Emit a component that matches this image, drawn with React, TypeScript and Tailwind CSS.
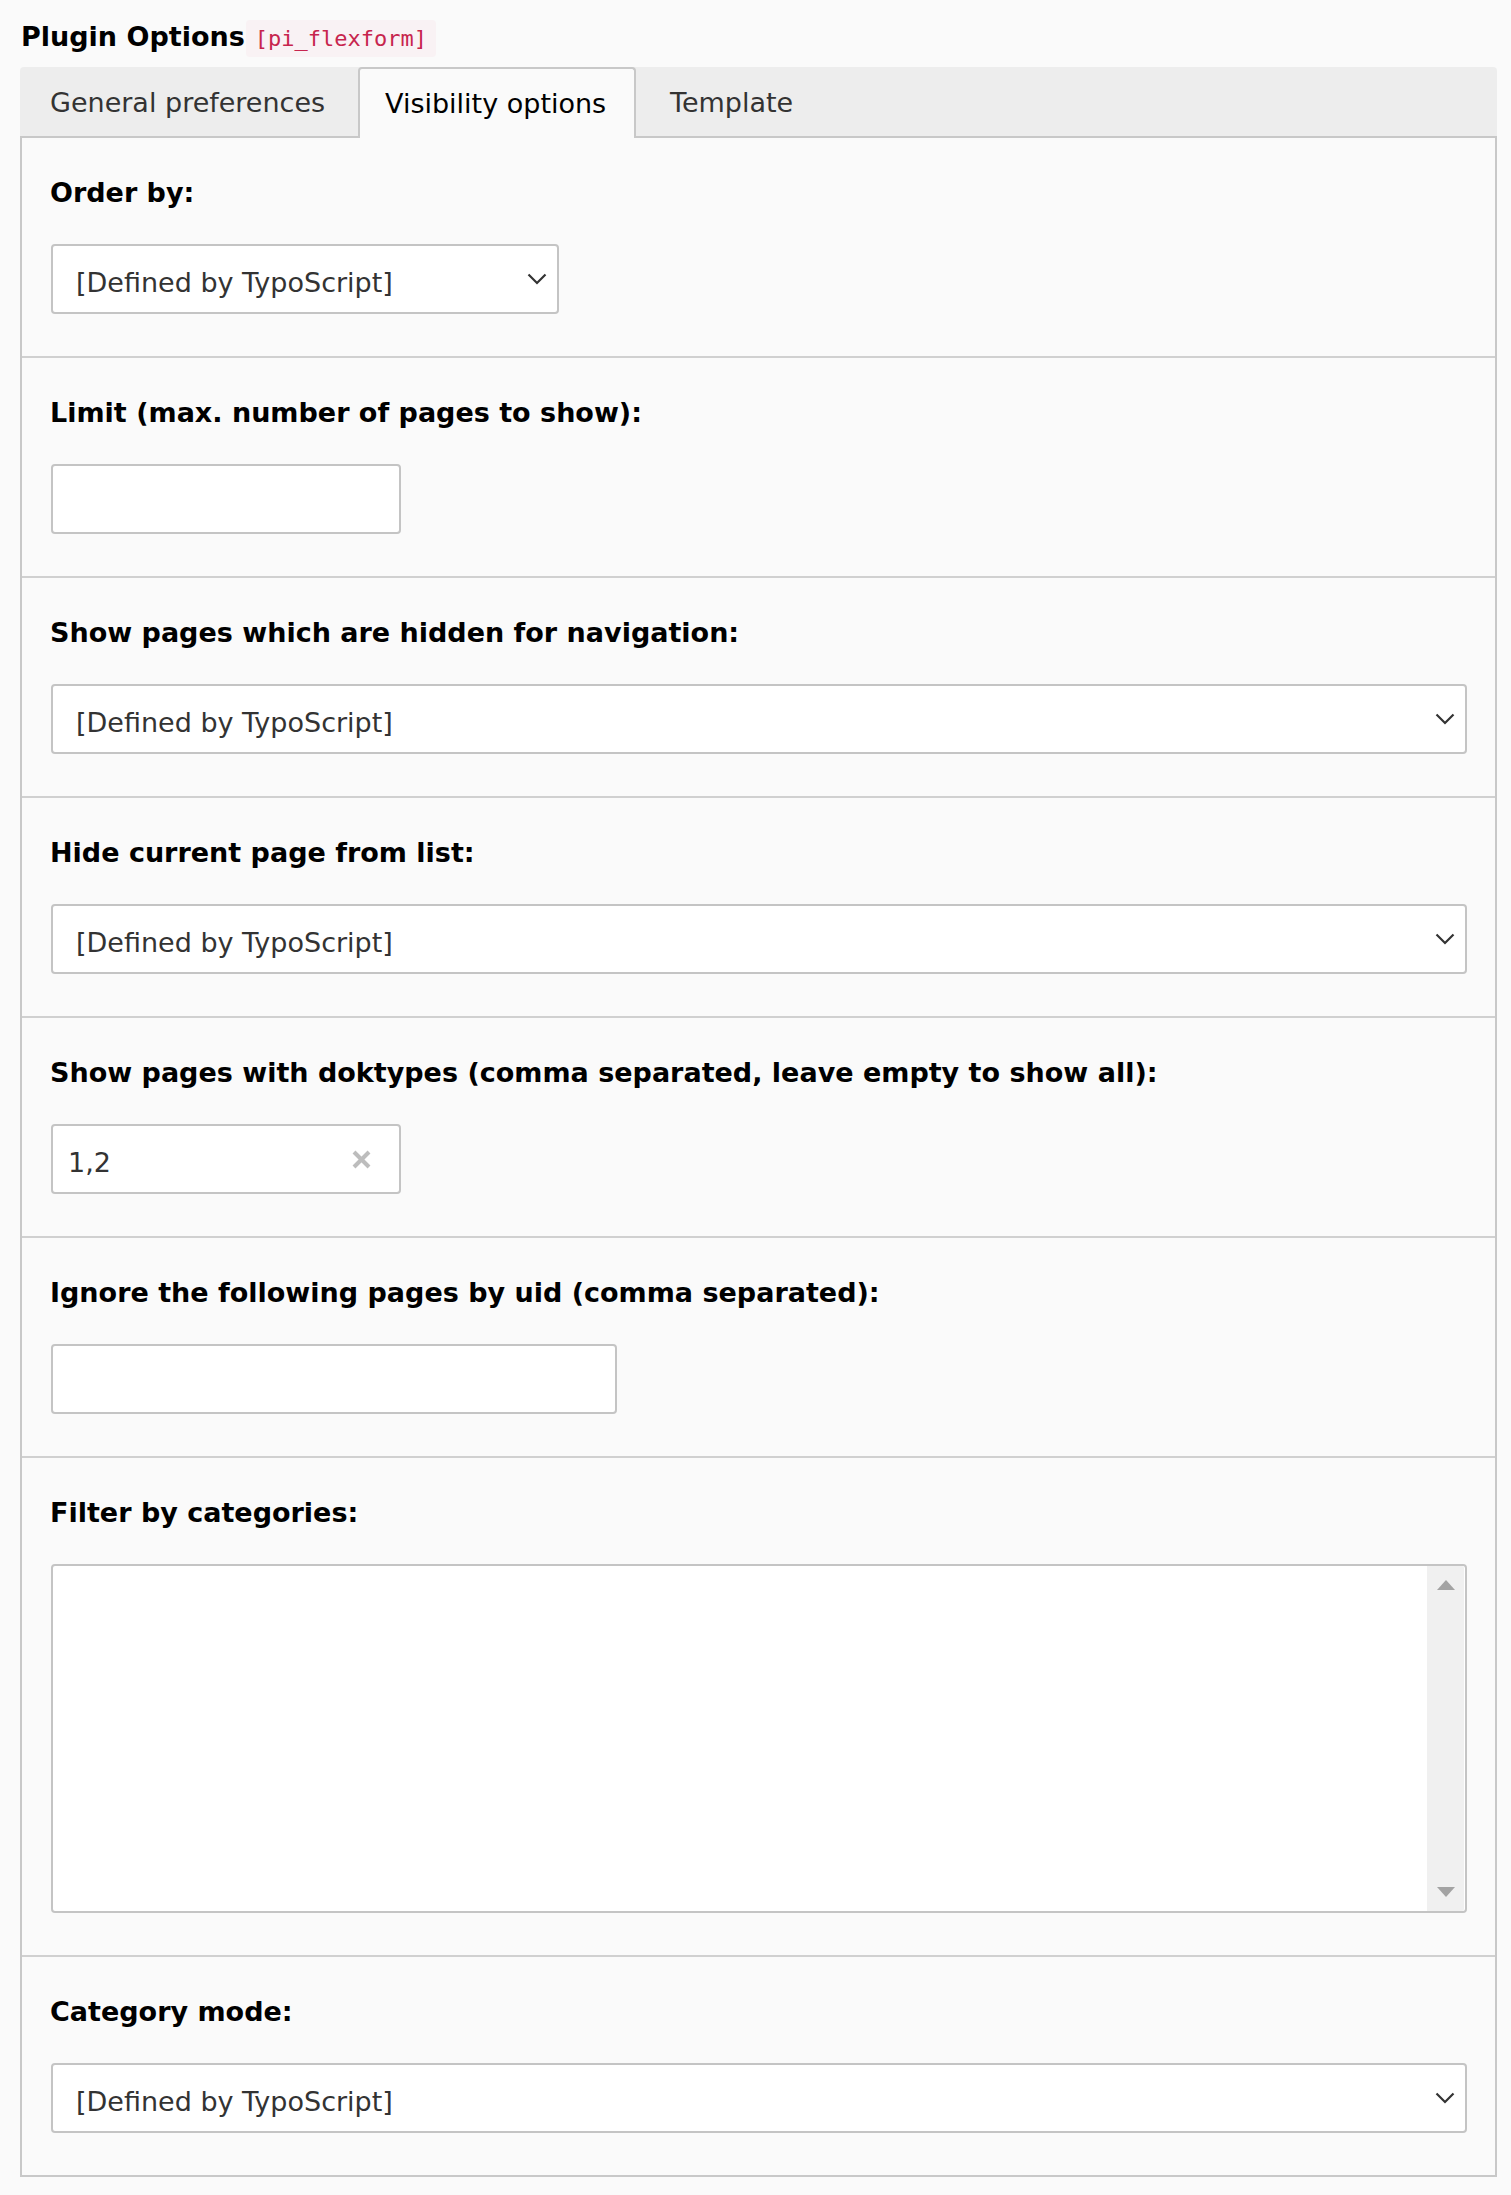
import React from "react";

const FONT = { fontFamily: '"DejaVu Sans", Verdana, sans-serif' };

function Chevron() {
  return (
    <svg width="20" height="12" viewBox="0 0 20 12" className="shrink-0">
      <polyline points="1.5,1.5 10,10 18.5,1.5" fill="none" stroke="#333" strokeWidth="2.2" />
    </svg>
  );
}

function Select({ width }: { width?: string }) {
  return (
    <div
      className={`h-[70px] bg-white border-2 border-[#c4c4c4] rounded-[4px] flex items-center justify-between pl-[23px] pr-[10px] text-[27px] text-[#333] ${width ?? "w-full"}`}
    >
      <span className="leading-[40px] pt-[7px]">[Defined by TypoScript]</span>
      <Chevron />
    </div>
  );
}

function Input({ width, value, clear }: { width: string; value?: string; clear?: boolean }) {
  return (
    <div
      className={`h-[70px] bg-white border-2 border-[#c4c4c4] rounded-[4px] flex items-center justify-between pl-[15px] pr-[28px] text-[27px] text-[#333] ${width}`}
    >
      <span className="leading-[40px] pt-[7px]">{value ?? ""}</span>
      {clear && (
        <svg width="19" height="19" viewBox="0 0 19 19">
          <line x1="2" y1="2" x2="17" y2="17" stroke="#bdbdbd" strokeWidth="4" />
          <line x1="17" y1="2" x2="2" y2="17" stroke="#bdbdbd" strokeWidth="4" />
        </svg>
      )}
    </div>
  );
}

function Section({ label, children, first }: { label: string; children: React.ReactNode; first?: boolean }) {
  return (
    <div className={`pt-[35px] pb-[42px] pl-[28px] pr-[28px] ${first ? "" : "border-t-2 border-[#d0d0d0]"}`}>
      <div className="text-[27px] leading-[40px] font-bold text-black mb-[31px]">{label}</div>
      <div className="pl-[1px]">{children}</div>
    </div>
  );
}

function MultiSelect() {
  return (
    <div className="h-[349px] bg-white border-2 border-[#c4c4c4] rounded-[4px] flex justify-end">
      <div className="w-[37px] h-full bg-[#f0f0f0] flex flex-col items-center justify-between py-[14px] mr-[1px] rounded-r-[2px]">
        <svg width="18" height="10" viewBox="0 0 18 10">
          <polygon points="9,0 18,10 0,10" fill="#a3a3a3" />
        </svg>
        <svg width="18" height="10" viewBox="0 0 18 10">
          <polygon points="0,0 18,0 9,10" fill="#a3a3a3" />
        </svg>
      </div>
    </div>
  );
}

export default function App() {
  return (
    <div className="min-h-[2195px] bg-[#fafafa] pl-[20px] pr-[14px]" style={FONT}>
      <div className="h-[67px] pt-[17px] flex items-start pl-[1px]">
        <span className="text-[27px] leading-[40px] font-bold text-black">Plugin Options</span>
        <code
          className="ml-[1px] mt-[3px] h-[37px] leading-[37px] px-[9px] rounded-[4px] bg-[#f9f2f4] text-[#c7254e] text-[22px]"
          style={{ fontFamily: '"DejaVu Sans Mono", "Liberation Mono", monospace' }}
        >
          [pi_flexform]
        </code>
      </div>

      <div className="h-[71px] flex bg-[#ededed] rounded-t-[4px] border-b-2 border-[#c8c8c8] text-[27px]">
        <div className="w-[338px] pl-[30px] flex items-center pt-[4px] text-[#333]">General preferences</div>
        <div className="self-start w-[278px] h-[71px] -mb-[2px] border-2 border-b-0 border-[#c8c8c8] rounded-t-[4px] bg-[#fafafa] pl-[25px] pt-[2px] flex items-center text-black">
          Visibility options
        </div>
        <div className="pl-[34px] flex items-center pt-[4px] text-[#333]">Template</div>
      </div>

      <div className="border-x-2 border-b-2 border-[#c8c8c8] bg-[#fafafa]">
        <Section label="Order by:" first>
          <Select width="w-[508px]" />
        </Section>
        <Section label="Limit (max. number of pages to show):">
          <Input width="w-[350px]" />
        </Section>
        <Section label="Show pages which are hidden for navigation:">
          <Select />
        </Section>
        <Section label="Hide current page from list:">
          <Select />
        </Section>
        <Section label="Show pages with doktypes (comma separated, leave empty to show all):">
          <Input width="w-[350px]" value="1,2" clear />
        </Section>
        <Section label="Ignore the following pages by uid (comma separated):">
          <Input width="w-[566px]" />
        </Section>
        <Section label="Filter by categories:">
          <MultiSelect />
        </Section>
        <Section label="Category mode:">
          <Select />
        </Section>
      </div>
    </div>
  );
}
